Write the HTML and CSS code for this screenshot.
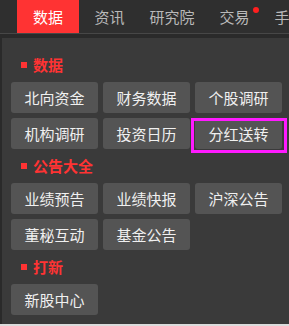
FILE: index.html
```html
<!DOCTYPE html>
<html lang="zh">
<head>
<meta charset="utf-8">
<link rel="stylesheet" href="styles.css">
</head>
<body>
<div class="page">
  <nav class="nav">
    <a class="nav-tab active">数据</a>
    <div class="nav-list">
      <a class="nav-item">资讯</a>
      <a class="nav-item">研究院</a>
      <a class="nav-item dot">交易</a>
      <a class="nav-item">手机</a>
    </div>
  </nav>
  <div class="nav-line"></div>
  <div class="panel">
    <section class="section first">
      <h3 class="heading">数据</h3>
      <div class="grid">
        <a class="btn">北向资金</a>
        <a class="btn">财务数据</a>
        <a class="btn">个股调研</a>
        <a class="btn">机构调研</a>
        <a class="btn">投资日历</a>
        <a class="btn marked">分红送转</a>
      </div>
    </section>
    <section class="section">
      <h3 class="heading">公告大全</h3>
      <div class="grid">
        <a class="btn">业绩预告</a>
        <a class="btn">业绩快报</a>
        <a class="btn">沪深公告</a>
        <a class="btn">董秘互动</a>
        <a class="btn">基金公告</a>
      </div>
    </section>
    <section class="section">
      <h3 class="heading">打新</h3>
      <div class="grid">
        <a class="btn">新股中心</a>
      </div>
    </section>
  </div>
</div>
</body>
</html>
```

FILE: styles.css
```css
* { box-sizing: border-box; }
html, body {
  margin: 0;
  padding: 0;
  background: #dcdcdc;
  font-family: "Noto Sans CJK SC", "Noto Sans", sans-serif;
  overflow: hidden;
}
.page {
  width: 289px;
  height: 324px;
  background: #2a2a2a;
  overflow: hidden;
}
.nav {
  height: 33px;
  background: #2f2f2f;
  display: flex;
  padding-left: 17px;
  white-space: nowrap;
}
.nav-tab {
  display: flex;
  align-items: center;
  padding: 0 16px;
  font-size: 15px;
  color: #fff;
  background: #ff3333;
}
.nav-list {
  display: flex;
  margin-left: 3px;
}
.nav-item {
  position: relative;
  display: flex;
  align-items: center;
  padding: 0 12.5px;
  font-size: 15px;
  color: #b9b9b9;
}
.nav-item.dot::after {
  content: "";
  position: absolute;
  top: 7px;
  right: 3px;
  width: 6px;
  height: 6px;
  border-radius: 50%;
  background: #ff1f1f;
}
.nav-line {
  height: 1px;
  background: #474747;
  margin-bottom: 4px;
}
.panel {
  margin-left: 2px;
  width: 310px;
  height: 286px;
  background: #3a3a3a;
  padding: 17px 0 10px 9px;
}
.section { margin-top: 7px; }
.section.first { margin-top: 0; }
.heading {
  margin: 0 0 7px 0;
  height: 20px;
  line-height: 20px;
  font-size: 15px;
  font-weight: bold;
  color: #ff3333;
  display: flex;
  align-items: center;
  padding-left: 10px;
}
.heading::before {
  content: "";
  width: 6px;
  height: 6px;
  background: #ff3333;
  margin-right: 6px;
}
.grid {
  display: grid;
  grid-template-columns: repeat(3, 87px);
  column-gap: 5px;
  row-gap: 5px;
}
.btn {
  position: relative;
  height: 31px;
  display: flex;
  align-items: center;
  justify-content: center;
  background: #545454;
  border-radius: 3px;
  font-size: 15px;
  color: #f0f0f0;
}
.btn.marked::after {
  content: "";
  position: absolute;
  top: 0;
  left: -4px;
  right: -5px;
  bottom: -4px;
  border: 3px solid #ff1aff;
}
```
